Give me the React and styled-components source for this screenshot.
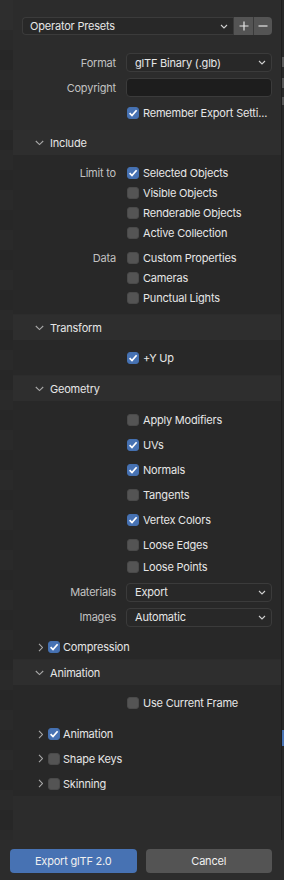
import React from "react";
import styled, { createGlobalStyle } from "styled-components";

const GlobalStyle = createGlobalStyle`
  html, body { margin: 0; padding: 0; background: #2c2c2c; }
  body {
    font-family: Inter, "DejaVu Sans", sans-serif;
    font-size: 11px;
    letter-spacing: -0.2px;
    color: #e6e6e6;
  }
  * { box-sizing: border-box; }
`;

const Window = styled.div`
  width: 284px;
  height: 880px;
  display: flex;
  flex-direction: column;
  background: #2c2c2c;
  overflow: hidden;
`;

const Main = styled.div`
  display: flex;
  height: 840px;
`;

// file list peeking out on the left
const FileList = styled.div`
  width: 13px;
  display: flex;
  flex-direction: column;
  overflow: hidden;
`;

const ListHeader = styled.div`
  height: 30px;
  flex-shrink: 0;
  background: #2e2e2e;
`;

const ListStripe = styled.div`
  height: 20px;
  flex-shrink: 0;
  background: ${(p) => (p.$odd ? "#2a2a2a" : "#272727")};
`;

const Sidebar = styled.div`
  width: 268px;
  display: flex;
  flex-direction: column;
  background: #2c2c2c;
`;

const RightEdge = styled.div`
  width: 3px;
  background: #282828;
  border-left: 1px solid #1e1e1e;
  display: flex;
  flex-direction: column;
`;

const EdgeBit = styled.div`
  height: ${(p) => p.$h}px;
  margin-top: ${(p) => p.$mt}px;
  background: ${(p) => p.$c};
`;

const TopBlock = styled.div`
  padding: 17px 9px 7px 9px;
  display: flex;
  flex-direction: column;
`;

const PresetRow = styled.div`
  display: flex;
  height: 18px;
`;

const PresetSelect = styled.div`
  flex: 1;
  display: flex;
  align-items: center;
  justify-content: space-between;
  padding: 0 5px 0 7px;
  background: #282828;
  border: 1px solid #3b3b3b;
  border-right: none;
  border-radius: 4px 0 0 4px;
`;

const PresetButton = styled.div`
  width: ${(p) => (p.$last ? 19 : 20)}px;
  display: flex;
  align-items: center;
  justify-content: center;
  background: #545454;
  border-left: 1px solid #3a3a3a;
  border-radius: ${(p) => (p.$last ? "0 4px 4px 0" : "0")};
`;

const Row = styled.div`
  display: grid;
  grid-template-columns: 94px 1fr;
  column-gap: 10px;
  align-items: center;
  height: ${(p) => p.$h || 20}px;
  margin-top: ${(p) => p.$mt || 0}px;
`;

const Label = styled.span`
  text-align: right;
  color: #c2c2c2;
  white-space: nowrap;
`;

const Select = styled.div`
  height: ${(p) => p.$h || 19}px;
  display: flex;
  align-items: center;
  justify-content: space-between;
  padding: 0 5px 0 8px;
  background: #282828;
  border: 1px solid #3b3b3b;
  border-radius: 4px;
  white-space: nowrap;
`;

const TextField = styled.div`
  height: 19px;
  background: #1d1d1d;
  border: 1px solid #3b3b3b;
  border-radius: 4px;
`;

const Check = styled.div`
  display: flex;
  align-items: center;
  gap: 4px;
  padding-left: 1px;
  white-space: nowrap;
  overflow: hidden;
`;

const Box = styled.span`
  width: 12px;
  height: 12px;
  flex-shrink: 0;
  border-radius: 3px;
  display: flex;
  align-items: center;
  justify-content: center;
  background: ${(p) => (p.$on ? "#4772b3" : "#545454")};
  border: 1px solid ${(p) => (p.$on ? "#4470b0" : "#4a4a4a")};
`;

const Panel = styled.section`
  margin-bottom: 1px;
  background: #282828;
`;

const PanelHeader = styled.div`
  height: 25px;
  display: flex;
  align-items: center;
  gap: 6px;
  padding-left: 22px;
  background: #2e2e2e;
  color: #e6e6e6;
`;

const PanelBody = styled.div`
  padding: ${(p) => p.$pad || "8px 9px 7px 9px"};
`;

const SubHeader = styled.div`
  height: ${(p) => p.$h || 25}px;
  margin-top: ${(p) => p.$mt || 0}px;
  display: flex;
  align-items: center;
  padding-left: 25px;
  gap: 5px;
`;

const SubTitle = styled.span`
  display: flex;
  align-items: center;
  gap: 3px;
`;

const Footer = styled.div`
  height: 40px;
  display: flex;
  gap: 9px;
  padding: 9px 12px 7px 10px;
  background: #2c2c2c;
`;

const Button = styled.div`
  flex: 1;
  height: 24px;
  display: flex;
  align-items: center;
  justify-content: center;
  border-radius: 4px;
  color: #f0f0f0;
  background: ${(p) => (p.$primary ? "#4772b3" : "#545454")};
`;

const DownArrow = () => (
  <svg width="8" height="5" viewBox="0 0 8 5">
    <polyline points="1,1 4,4 7,1" fill="none" stroke="#d0d0d0" strokeWidth="1.1" />
  </svg>
);

const OpenChevron = () => (
  <svg width="9" height="6" viewBox="0 0 9 6">
    <polyline points="0.8,1 4.5,4.6 8.2,1" fill="none" stroke="#a8a8a8" strokeWidth="1.1" />
  </svg>
);

const ClosedChevron = () => (
  <svg width="5" height="9" viewBox="0 0 5 9">
    <polyline points="1,0.8 4.4,4.5 1,8.2" fill="none" stroke="#a8a8a8" strokeWidth="1.1" />
  </svg>
);

const Tick = () => (
  <svg width="10" height="10" viewBox="0 0 10 10">
    <polyline points="1.6,5.2 4,7.6 8.6,2.2" fill="none" stroke="#ffffff" strokeWidth="1.7" />
  </svg>
);

function Checkbox({ on, children }) {
  return (
    <Check>
      <Box $on={on}>{on && <Tick />}</Box>
      <span>{children}</span>
    </Check>
  );
}

function CheckRow({ label, on, text, mt }) {
  return (
    <Row $mt={mt}>
      <Label>{label}</Label>
      <Checkbox on={on}>{text}</Checkbox>
    </Row>
  );
}

function SubPanel({ on, text, mt, h }) {
  return (
    <SubHeader $mt={mt} $h={h}>
      <ClosedChevron />
      <SubTitle>
        <Box $on={on}>{on && <Tick />}</Box>
        <span>{text}</span>
      </SubTitle>
    </SubHeader>
  );
}

export default function App() {
  const stripes = Array.from({ length: 41 }, (_, i) => i);
  return (
    <Window>
      <GlobalStyle />
      <Main>
        <FileList>
          <ListHeader />
          {stripes.map((i) => (
            <ListStripe key={i} $odd={i % 2 === 0} />
          ))}
        </FileList>

        <Sidebar>
          <TopBlock>
            <PresetRow>
              <PresetSelect>
                <span>Operator Presets</span>
                <DownArrow />
              </PresetSelect>
              <PresetButton>
                <svg width="10" height="10" viewBox="0 0 10 10">
                  <path d="M5 0.5V9.5M0.5 5H9.5" stroke="#e6e6e6" strokeWidth="1.2" />
                </svg>
              </PresetButton>
              <PresetButton $last>
                <svg width="10" height="10" viewBox="0 0 10 10">
                  <path d="M0.5 5H9.5" stroke="#e6e6e6" strokeWidth="1.2" />
                </svg>
              </PresetButton>
            </PresetRow>
            <Row $h={19} $mt={18}>
              <Label>Format</Label>
              <Select>
                <span>glTF Binary (.glb)</span>
                <DownArrow />
              </Select>
            </Row>
            <Row $h={19} $mt={6}>
              <Label>Copyright</Label>
              <TextField />
            </Row>
            <CheckRow mt={6} on text="Remember Export Setti..." />
          </TopBlock>

          <Panel>
            <PanelHeader>
              <OpenChevron />
              <span>Include</span>
            </PanelHeader>
            <PanelBody $pad="8px 9px 6px 9px">
              <CheckRow label="Limit to" on text="Selected Objects" />
              <CheckRow text="Visible Objects" />
              <CheckRow text="Renderable Objects" />
              <CheckRow text="Active Collection" />
              <CheckRow mt={5} label="Data" text="Custom Properties" />
              <CheckRow text="Cameras" />
              <CheckRow text="Punctual Lights" />
            </PanelBody>
          </Panel>

          <Panel>
            <PanelHeader>
              <OpenChevron />
              <span>Transform</span>
            </PanelHeader>
            <PanelBody>
              <CheckRow on text="+Y Up" />
            </PanelBody>
          </Panel>

          <Panel>
            <PanelHeader>
              <OpenChevron />
              <span>Geometry</span>
            </PanelHeader>
            <PanelBody $pad="9px 9px 0 9px">
              <CheckRow text="Apply Modifiers" />
              <CheckRow mt={5} on text="UVs" />
              <CheckRow mt={5} on text="Normals" />
              <CheckRow mt={5} text="Tangents" />
              <CheckRow mt={5} on text="Vertex Colors" />
              <CheckRow mt={5} text="Loose Edges" />
              <CheckRow mt={2} text="Loose Points" />
              <Row $mt={5}>
                <Label>Materials</Label>
                <Select>
                  <span>Export</span>
                  <DownArrow />
                </Select>
              </Row>
              <Row $mt={5}>
                <Label>Images</Label>
                <Select>
                  <span>Automatic</span>
                  <DownArrow />
                </Select>
              </Row>
            </PanelBody>
            <SubPanel mt={8} h={24} on text="Compression" />
          </Panel>

          <Panel>
            <PanelHeader>
              <OpenChevron />
              <span>Animation</span>
            </PanelHeader>
            <PanelBody $pad="8px 9px 0 9px">
              <CheckRow text="Use Current Frame" />
            </PanelBody>
            <SubPanel mt={9} h={24} on text="Animation" />
            <SubPanel text="Shape Keys" />
            <SubPanel text="Skinning" />
          </Panel>
        </Sidebar>

        <RightEdge>
          <EdgeBit $mt={57} $h={10} $c="#5a5a5a" />
          <EdgeBit $mt={11} $h={10} $c="#555555" />
          <EdgeBit $mt={9} $h={8} $c="#555555" />
          <EdgeBit $mt={625} $h={16} $c="#4772b3" />
        </RightEdge>
      </Main>

      <Footer>
        <Button $primary>Export glTF 2.0</Button>
        <Button>Cancel</Button>
      </Footer>
    </Window>
  );
}
